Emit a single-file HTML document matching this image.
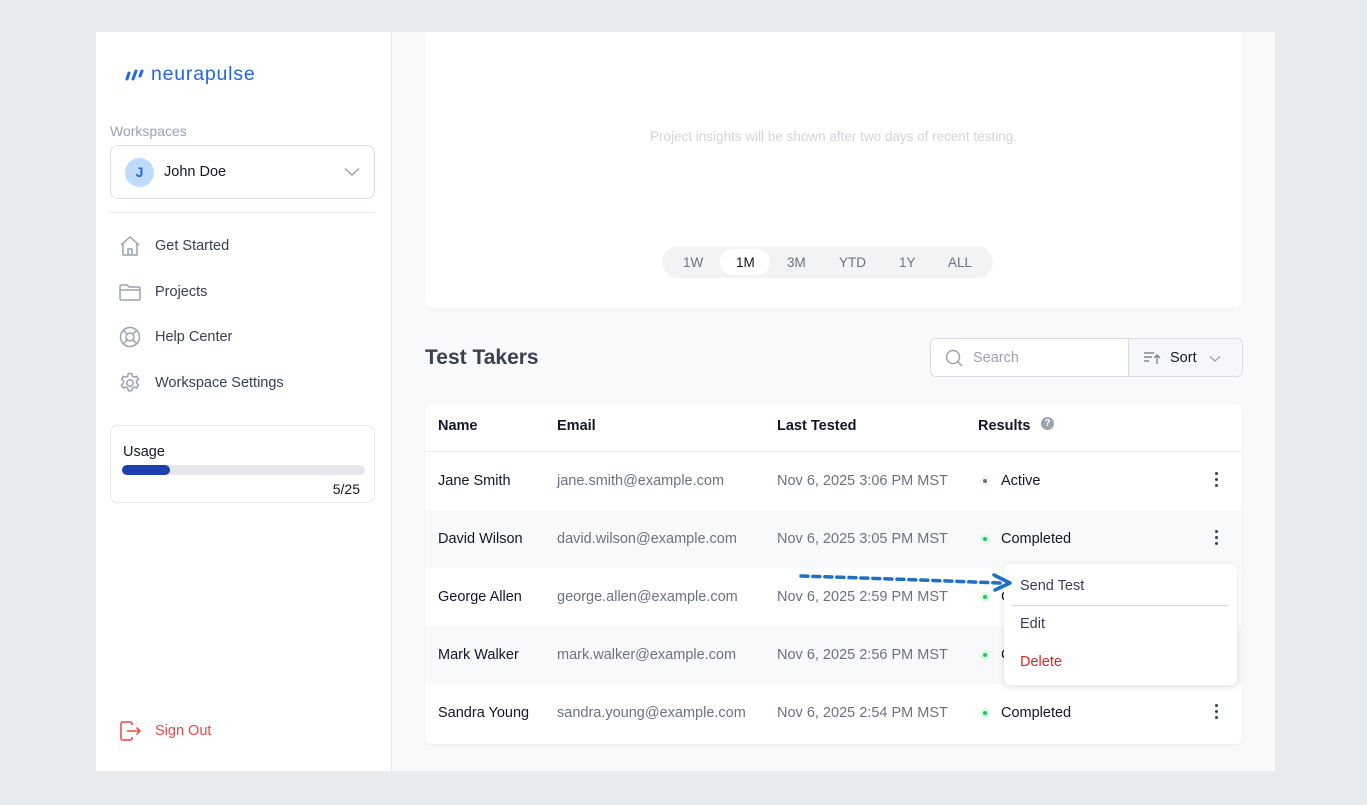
<!DOCTYPE html>
<html><head><meta charset="utf-8"><style>
*{box-sizing:border-box;margin:0;padding:0}
body{width:1367px;height:805px;background:#e8ebee;font-family:"Liberation Sans",sans-serif;position:relative;overflow:hidden;color:#1f2937}
.a{position:absolute}
#side{left:96px;top:32px;width:296px;height:739px;background:#fff;border-right:1px solid #e5e7eb}
#main{left:392px;top:32px;width:883px;height:739px;background:#f8f9fb}
.nav{position:absolute;left:22px;font-size:14.5px;color:#374151;display:flex;align-items:center}
.nav svg{margin-right:13px}
.row{position:absolute;left:0;width:817px;height:58px;font-size:14.5px}
.row span{position:absolute;top:21px}
.c1{left:13px;color:#111827}.c2{left:132px;color:#6b7280}.c3{left:352px;color:#6b7280}.c4{left:576px;color:#111827}
.dot{position:absolute;left:555px;top:24px;width:10px;height:10px;border-radius:50%;background:#dcfce7}
.dot i{position:absolute;left:3px;top:3px;width:4px;height:4px;border-radius:50%;background:#22c55e}
.kb{position:absolute;left:790px;top:20px;width:4px}
.kb b{display:block;width:3px;height:3px;border-radius:50%;background:#374151;margin-bottom:3px}
</style></head><body>
<div id="side" class="a">
  <div class="a" style="left:28px;top:31px;display:flex;align-items:center">
    <svg width="22" height="14" viewBox="0 0 22 14"><g stroke="#2563eb" stroke-width="3" stroke-linecap="round"><path d="M3 11L5 5"/><path d="M9 11L12 3"/><path d="M16 8L18 3"/></g></svg>
    <span style="font-size:19.5px;color:#2563eb;margin-left:5px;letter-spacing:0.8px">neurapulse</span>
  </div>
  <div class="a" style="left:14px;top:91px;font-size:14px;color:#94a3b8">Workspaces</div>
  <div class="a" style="left:14px;top:113px;width:265px;height:54px;border:1px solid #d9dde3;border-radius:8px">
    <div class="a" style="left:14px;top:12px;width:29px;height:29px;border-radius:50%;background:#bfdbfe;color:#2563eb;font-size:14px;font-weight:bold;text-align:center;line-height:29px">J</div>
    <div class="a" style="left:53px;top:18px;font-size:14.5px;color:#111827">John Doe</div>
    <svg class="a" style="left:233px;top:21px" width="16" height="10" viewBox="0 0 16 10"><path d="M1 1.5L8 8L15 1.5" fill="none" stroke="#9ca3af" stroke-width="1.5"/></svg>
  </div>
  <div class="a" style="left:14px;top:180px;width:265px;height:1px;background:#e5e7eb"></div>
  <div class="nav" style="top:202px"><svg width="24" height="24" viewBox="0 0 24 24" fill="none" stroke="#9ca3af" stroke-width="1.5"><path d="M3 11L12 3l9 8M5 9.5V21h14V9.5M10 21v-6h4v6"/></svg>Get Started</div>
  <div class="nav" style="top:248px"><svg width="24" height="24" viewBox="0 0 24 24" fill="none" stroke="#9ca3af" stroke-width="1.5"><path d="M2 6.5a1.5 1.5 0 011.5-1.5H9l2 2h9.5A1.5 1.5 0 0122 8.5v10a1.5 1.5 0 01-1.5 1.5h-17A1.5 1.5 0 012 18.5zM2 10h20"/></svg>Projects</div>
  <div class="nav" style="top:293px"><svg width="24" height="24" viewBox="0 0 24 24" fill="none" stroke="#9ca3af" stroke-width="1.5"><circle cx="12" cy="12" r="9.5"/><circle cx="12" cy="12" r="4"/><path d="M5.3 5.3l3.9 3.9M14.8 14.8l3.9 3.9M18.7 5.3l-3.9 3.9M9.2 14.8l-3.9 3.9"/></svg>Help Center</div>
  <div class="nav" style="top:339px"><svg width="24" height="24" viewBox="0 0 24 24" fill="none" stroke="#9ca3af" stroke-width="1.5"><circle cx="12" cy="12" r="3.2"/><path d="M10.3 2.5h3.4l.6 2.6 2 1.1 2.5-.9 1.7 2.9-2 1.8v2.2l2 1.8-1.7 2.9-2.5-.9-2 1.1-.6 2.6h-3.4l-.6-2.6-2-1.1-2.5.9-1.7-2.9 2-1.8v-2.2l-2-1.8 1.7-2.9 2.5.9 2-1.1z"/></svg>Workspace Settings</div>
  <div class="a" style="left:14px;top:393px;width:265px;height:78px;border:1px solid #e5e7eb;border-radius:8px">
    <div class="a" style="left:12px;top:18px;font-size:14.5px;color:#111827">Usage</div>
    <div class="a" style="left:11px;top:39px;width:243px;height:10px;border-radius:5px;background:#e5e7eb"><div style="width:48px;height:10px;border-radius:5px;background:#1e40af"></div></div>
    <div class="a" style="right:14px;top:55px;font-size:14px;color:#111827">5/25</div>
  </div>
  <div class="nav" style="top:687px;color:#ef4444"><svg width="24" height="24" viewBox="0 0 24 24" fill="none" stroke="#ef4444" stroke-width="1.5"><path d="M14 6V4.5A1.5 1.5 0 0012.5 3h-8A1.5 1.5 0 003 4.5v15A1.5 1.5 0 004.5 21h8a1.5 1.5 0 001.5-1.5V18M9 12h13M18.5 8.5L22 12l-3.5 3.5"/></svg>Sign Out</div>
</div>
<div id="main" class="a">
  <div class="a" style="left:33px;top:0;width:817px;height:276px;background:#fff;border-radius:0 0 8px 8px;box-shadow:0 1px 2px rgba(0,0,0,.04)">
    <div class="a" style="left:0;width:817px;top:97px;text-align:center;font-size:13.5px;color:#d1d5db">Project insights will be shown after two days of recent testing.</div>
    <div class="a" style="left:237px;top:214px;width:331px;height:32px;border-radius:16px;background:#f1f3f5;font-size:13.5px;color:#6b7280">
      <div class="a" style="left:58px;top:3px;width:50px;height:26px;border-radius:13px;background:#fff"></div>
      <span class="a" style="left:21px;top:9px">1W</span><span class="a" style="left:74px;top:9px;color:#111827">1M</span><span class="a" style="left:125px;top:9px">3M</span><span class="a" style="left:177px;top:9px">YTD</span><span class="a" style="left:237px;top:9px">1Y</span><span class="a" style="left:286px;top:9px">ALL</span>
    </div>
  </div>
  <div class="a" style="left:33px;top:314px;font-size:21px;font-weight:bold;color:#374151">Test Takers</div>
  <div class="a" style="left:538px;top:306px;width:313px;height:39px;border:1px solid #d9dde3;border-radius:6px;background:#fff;overflow:hidden">
    <svg class="a" style="left:14px;top:10px" width="18" height="18" viewBox="0 0 18 18" fill="none" stroke="#9ca3af" stroke-width="1.5"><circle cx="8" cy="8" r="6.5"/><path d="M12.7 12.7L17 17"/></svg>
    <span class="a" style="left:42px;top:11px;font-size:14.5px;color:#9ca3af">Search</span>
    <div class="a" style="left:197px;top:0;width:116px;height:39px;background:#f5f7fa;border-left:1px solid #d9dde3">
      <svg class="a" style="left:14px;top:12px" width="18" height="14" viewBox="0 0 18 14" fill="none" stroke="#6b7280" stroke-width="1.2"><path d="M1 2h10M1 6h8M1 10h5M14 13V4M11 7l3-3 3 3"/></svg>
      <span class="a" style="left:41px;top:11px;font-size:14.5px;color:#111827">Sort</span>
      <svg class="a" style="left:80px;top:16px" width="12" height="8" viewBox="0 0 12 8"><path d="M1 1.5L6 6l5-4.5" fill="none" stroke="#9ca3af" stroke-width="1.3"/></svg>
    </div>
  </div>
  <div class="a" style="left:33px;top:372px;width:817px;height:340px;background:#fff;border-radius:6px;overflow:hidden;box-shadow:0 1px 2px rgba(0,0,0,.06)">
    <div class="row" style="top:0;height:48px;font-weight:bold;border-bottom:1px solid #eceef1"><span class="c1" style="top:14px">Name</span><span class="c2" style="top:14px;color:#111827">Email</span><span class="c3" style="top:14px;color:#111827">Last Tested</span><span style="left:553px;top:14px;color:#111827">Results</span><span style="left:616px;top:13px;width:13px;height:13px;border-radius:50%;background:#9ca3af;color:#fff;font-size:10px;text-align:center;line-height:13px">?</span></div>
    <div class="row" style="top:48px"><span class="c1">Jane Smith</span><span class="c2">jane.smith@example.com</span><span class="c3">Nov 6, 2025 3:06 PM MST</span><div class="dot" style="background:#f3f4f6"><i style="background:#6b7280"></i></div><span class="c4">Active</span><div class="kb"><b></b><b></b><b></b></div></div>
    <div class="row" style="top:106px;background:#f8f9fb"><span class="c1">David Wilson</span><span class="c2">david.wilson@example.com</span><span class="c3">Nov 6, 2025 3:05 PM MST</span><div class="dot"><i></i></div><span class="c4">Completed</span><div class="kb"><b></b><b></b><b></b></div></div>
    <div class="row" style="top:164px"><span class="c1">George Allen</span><span class="c2">george.allen@example.com</span><span class="c3">Nov 6, 2025 2:59 PM MST</span><div class="dot"><i></i></div><span class="c4">Completed</span></div>
    <div class="row" style="top:222px;background:#f8f9fb"><span class="c1">Mark Walker</span><span class="c2">mark.walker@example.com</span><span class="c3">Nov 6, 2025 2:56 PM MST</span><div class="dot"><i></i></div><span class="c4">Completed</span></div>
    <div class="row" style="top:280px"><span class="c1">Sandra Young</span><span class="c2">sandra.young@example.com</span><span class="c3">Nov 6, 2025 2:54 PM MST</span><div class="dot"><i></i></div><span class="c4">Completed</span><div class="kb"><b></b><b></b><b></b></div></div>
  </div>
  <div class="a" style="left:612px;top:532px;width:233px;height:121px;background:#fff;border-radius:6px;box-shadow:0 2px 8px rgba(0,0,0,.12)">
    <span class="a" style="left:16px;top:14px;font-size:14.5px;color:#374151">Send Test</span>
    <div class="a" style="left:8px;top:41px;width:216px;height:1px;background:#d1d5db"></div>
    <span class="a" style="left:16px;top:52px;font-size:14.5px;color:#374151">Edit</span>
    <span class="a" style="left:16px;top:90px;font-size:14.5px;color:#dc2626">Delete</span>
  </div>
  <svg class="a" style="left:405px;top:536px" width="220" height="24" viewBox="0 0 220 24"><path d="M4 8Q100 11 203 15" fill="none" stroke="#1d6fc9" stroke-width="3.5" stroke-dasharray="7 5" stroke-linecap="round"/><path d="M197 7L213 15L198 22" fill="none" stroke="#1d6fc9" stroke-width="3.5" stroke-linejoin="round" stroke-linecap="round"/></svg>
</div>
</body></html>
